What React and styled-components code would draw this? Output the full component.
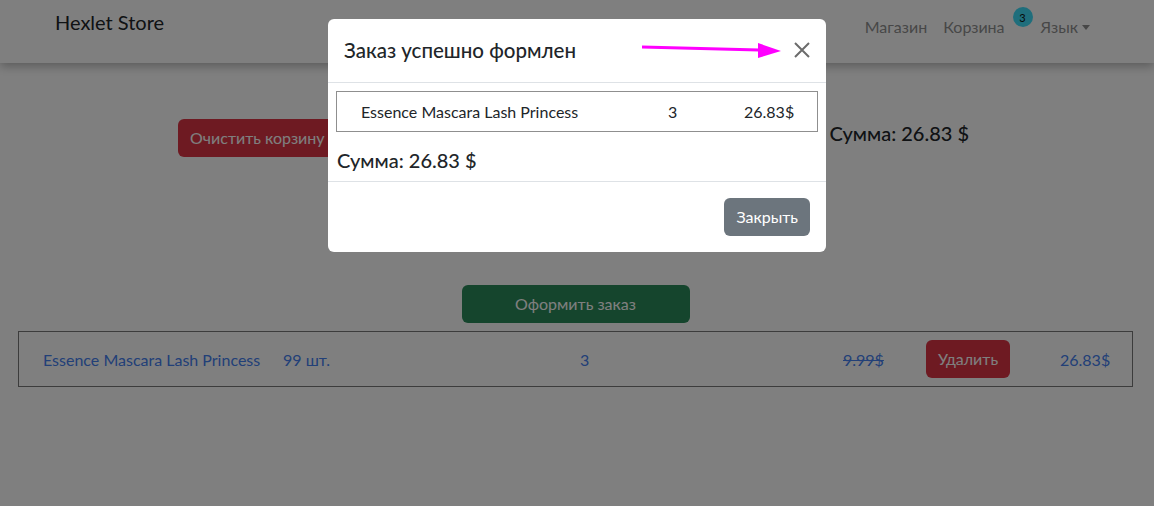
import styled, { createGlobalStyle } from 'styled-components';

const GlobalStyle = createGlobalStyle`
  body {
    margin: 0;
    background: #fff;
    font-family: Lato, "Noto Sans", sans-serif;
    color: #212529;
  }
`;

const Page = styled.div`
  min-height: 506px;
`;

const Navbar = styled.nav`
  height: 63px;
  display: flex;
  justify-content: space-between;
  align-items: flex-start;
  padding: 0 56px 0 55px;
  box-shadow: 0 3px 10px rgba(0, 0, 0, 0.3);
`;

const Brand = styled.a`
  padding-top: 7px;
  font-size: 20px;
  line-height: 30px;
  color: #212529;
`;

const Nav = styled.div`
  display: flex;
  align-items: flex-start;
  padding-top: 15px;
`;

const NavLink = styled.a`
  padding: 0 8px;
  font-size: 16px;
  line-height: 24px;
  color: #8f8f8f;
  display: flex;
  align-items: center;
`;

const Caret = styled.span`
  margin-left: 4px;
  border-top: 5px solid currentColor;
  border-left: 4px solid transparent;
  border-right: 4px solid transparent;
`;

const Badge = styled.span`
  margin-top: -8px;
  width: 20px;
  height: 20px;
  border-radius: 50%;
  background: #3fdcf8;
  color: #111;
  font-size: 11px;
  display: flex;
  align-items: center;
  justify-content: center;
`;

const Main = styled.main`
  padding: 56px 21px 0 18px;
`;

const TopRow = styled.div`
  display: flex;
  align-items: flex-start;
  padding: 0 164px 0 160px;
`;

const Button = styled.button`
  font-family: inherit;
  font-size: 16px;
  line-height: 24px;
  padding: 7px 12px;
  border: none;
  border-radius: 6px;
  color: #fff;
  background: ${(p) => p.$bg};
  width: ${(p) => p.$width || 'auto'};
`;

const SumText = styled.div`
  margin-left: auto;
  font-size: 20px;
  font-weight: 500;
  line-height: 28px;
`;

const Center = styled.div`
  display: flex;
  justify-content: center;
  margin: 128px 0 8px;
`;

const CartRow = styled.div`
  border: 1px solid #787878;
  padding: 8px 24px;
  display: grid;
  grid-template-columns: 240px 297px 263px 83px 134px auto;
  align-items: center;
  color: #4480f0;
  font-size: 16px;
`;

const OldPrice = styled.span`
  text-decoration: line-through;
`;

const Overlay = styled.div`
  position: fixed;
  inset: 0;
  background: rgba(0, 0, 0, 0.5);
  display: flex;
  justify-content: center;
  align-items: flex-start;
  padding-top: 19px;
`;

const Modal = styled.div`
  position: relative;
  width: 498px;
  background: #fff;
  border-radius: 6px;
`;

const ModalHeader = styled.div`
  display: flex;
  align-items: center;
  justify-content: space-between;
  padding: 16px 16px 17px;
  border-bottom: 1px solid #dee2e6;
`;

const ModalTitle = styled.h5`
  margin: 0;
  font-size: 20.5px;
  font-weight: 500;
  line-height: 30px;
`;

const CloseButton = styled.button`
  border: none;
  background: none;
  padding: 0;
  width: 16px;
  height: 16px;
  display: flex;
`;

const ModalBody = styled.div`
  padding: 8px;
  border-bottom: 1px solid #dee2e6;
`;

const OrderRow = styled.div`
  border: 1px solid #8f8f8f;
  padding: 0 25px 0 24px;
  height: 39px;
  display: grid;
  grid-template-columns: 307px 76px auto;
  align-items: center;
  font-size: 16px;
  margin-bottom: 15px;
`;

const ModalSum = styled.div`
  font-size: 20px;
  font-weight: 500;
  line-height: 26px;
  padding-left: 1px;
`;

const ModalFooter = styled.div`
  display: flex;
  justify-content: flex-end;
  padding: 16px;
`;

const Arrow = styled.svg`
  position: absolute;
  left: 310px;
  top: 20px;
`;

export default function App() {
  return (
    <Page>
      <GlobalStyle />
      <Navbar>
        <Brand>Hexlet Store</Brand>
        <Nav>
          <NavLink>Магазин</NavLink>
          <NavLink>Корзина</NavLink>
          <Badge>3</Badge>
          <NavLink>
            Язык
            <Caret />
          </NavLink>
        </Nav>
      </Navbar>
      <Main>
        <TopRow>
          <Button $bg="#dc3545">Очистить корзину</Button>
          <SumText>Сумма: 26.83 $</SumText>
        </TopRow>
        <Center>
          <Button $bg="#2a8a5a" $width="228px">
            Оформить заказ
          </Button>
        </Center>
        <CartRow>
          <span>Essence Mascara Lash Princess</span>
          <span>99 шт.</span>
          <span>3</span>
          <OldPrice>9.99$</OldPrice>
          <span>
            <Button $bg="#dc3545">Удалить</Button>
          </span>
          <span>26.83$</span>
        </CartRow>
      </Main>
      <Overlay>
        <Modal>
          <ModalHeader>
            <ModalTitle>Заказ успешно формлен</ModalTitle>
            <CloseButton aria-label="Закрыть">
              <svg width="16" height="16" viewBox="0 0 16 16">
                <path d="M1 1L15 15M15 1L1 15" stroke="#6c6c6c" strokeWidth="2" />
              </svg>
            </CloseButton>
          </ModalHeader>
          <ModalBody>
            <OrderRow>
              <span>Essence Mascara Lash Princess</span>
              <span>3</span>
              <span>26.83$</span>
            </OrderRow>
            <ModalSum>Сумма: 26.83 $</ModalSum>
          </ModalBody>
          <ModalFooter>
            <Button $bg="#6c757d">Закрыть</Button>
          </ModalFooter>
          <Arrow width="150" height="24" viewBox="0 0 150 24">
            <path d="M4 8L121 11" stroke="#ff00ff" strokeWidth="3" />
            <polygon points="120,4 120,19 143,12" fill="#ff00ff" />
          </Arrow>
        </Modal>
      </Overlay>
    </Page>
  );
}
